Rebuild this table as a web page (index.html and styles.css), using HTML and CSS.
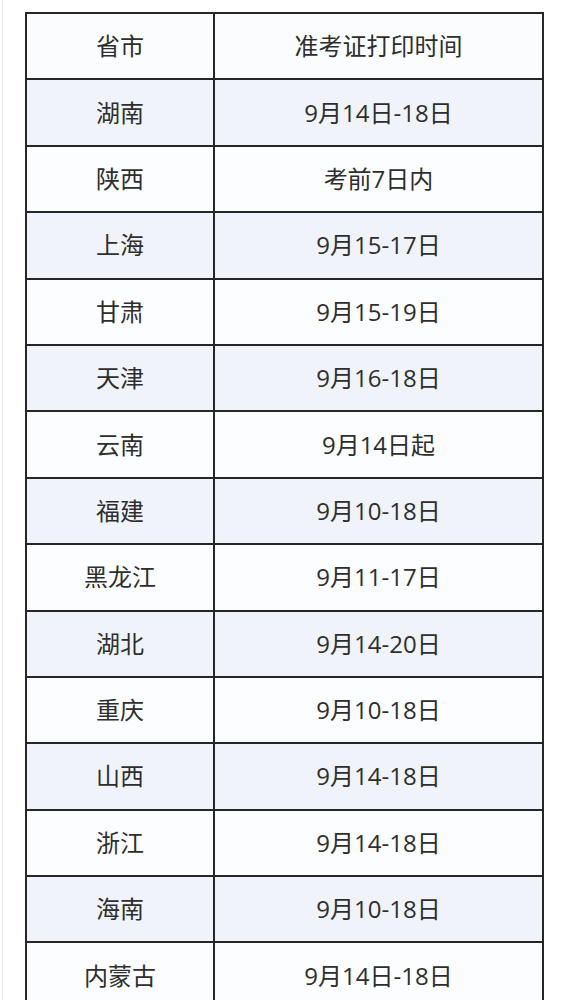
FILE: index.html
```html
<!DOCTYPE html>
<html lang="zh-CN">
<head>
<meta charset="utf-8">
<link rel="stylesheet" href="styles.css">
</head>
<body>
<div class="page">
<table class="schedule">
  <colgroup><col class="c-prov"><col class="c-date"></colgroup>
  <thead>
    <tr><th>省市</th><th>准考证打印时间</th></tr>
  </thead>
  <tbody>
    <tr class="alt"><td>湖南</td><td>9月14日-18日</td></tr>
    <tr><td>陕西</td><td>考前7日内</td></tr>
    <tr class="alt"><td>上海</td><td>9月15-17日</td></tr>
    <tr><td>甘肃</td><td>9月15-19日</td></tr>
    <tr class="alt"><td>天津</td><td>9月16-18日</td></tr>
    <tr><td>云南</td><td>9月14日起</td></tr>
    <tr class="alt"><td>福建</td><td>9月10-18日</td></tr>
    <tr><td>黑龙江</td><td>9月11-17日</td></tr>
    <tr class="alt"><td>湖北</td><td>9月14-20日</td></tr>
    <tr><td>重庆</td><td>9月10-18日</td></tr>
    <tr class="alt"><td>山西</td><td>9月14-18日</td></tr>
    <tr><td>浙江</td><td>9月14-18日</td></tr>
    <tr class="alt"><td>海南</td><td>9月10-18日</td></tr>
    <tr><td>内蒙古</td><td>9月14日-18日</td></tr>
  </tbody>
</table>
</div>
</body>
</html>
```
FILE: styles.css
```css
html, body {
  margin: 0;
  padding: 0;
  background: #ffffff;
}
.page {
  margin-left: 2px;
  padding: 12px 0 0 22px;
  border-left: 1px solid #ececec;
  min-height: 1000px;
  box-sizing: border-box;
}
.schedule {
  width: 519px;
  border-collapse: collapse;
  table-layout: fixed;
  font-family: "Open Sans", "Noto Sans CJK SC", sans-serif;
  font-size: 24px;
  color: #2e2e2e;
  border: 2px solid #262626;
}
.c-prov { width: 188px; }
.schedule th,
.schedule td {
  border: 2px solid #262626;
  text-align: center;
  vertical-align: middle;
  font-weight: normal;
  padding: 0;
  height: 64.4px;
  line-height: 1;
}
.schedule th { background: #fbfcfe; }
.schedule tr td { background: #fcfdfe; }
.schedule tr.alt td { background: #f0f4fa; }
```
